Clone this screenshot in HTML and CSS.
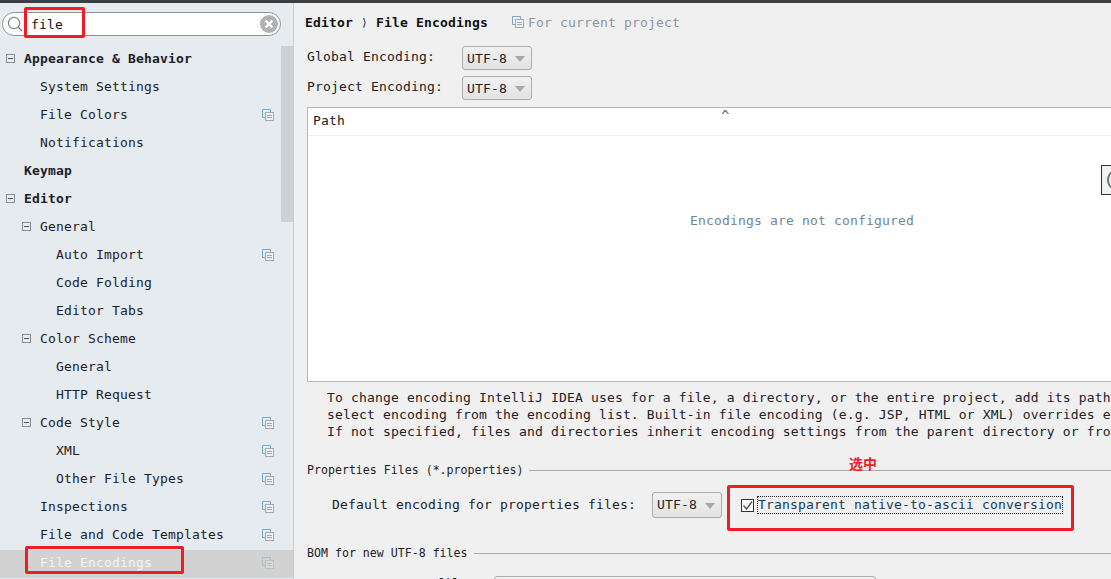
FILE: index.html
```html
<!DOCTYPE html>
<html lang="en">
<head>
    <meta charset="UTF-8">
    <meta name="viewport" content="width=device-width, initial-scale=1.0">
    <title>File Encodings</title>
    <link rel="stylesheet" href="styles.css">
</head>
<body>

    <svg class="defs" width="0" height="0">
        <symbol id="project-icon" viewBox="0 0 12 12">
            <path d="M0.5 8.5V0.5H8.5" fill="none" stroke="currentColor"/>
            <path d="M0.5 8.5H3M8.5 0.5V3" fill="none" stroke="currentColor"/>
            <rect x="3.5" y="3.5" width="8" height="8" fill="#f4f6f8" fill-opacity="0.5" stroke="#a4a9ad"/>
            <path d="M5 6.5H10M5 8.5H10" fill="none" stroke="#a4a9ad"/>
        </symbol>
    </svg>

    <div class="top-bar"></div>

    <div class="main">
        <aside class="sidebar">
            <div class="search">
                <svg class="search-icon" width="16" height="16" viewBox="0 0 17 17">
                    <circle cx="7.5" cy="7.5" r="6" fill="none" stroke="#7b8084" stroke-width="1.2"/>
                    <path d="M12 12L16 16" stroke="#7b8084" stroke-width="1.4"/>
                </svg>
                <span class="search-text">file</span>
                <svg class="search-clear" width="18" height="18" viewBox="0 0 18 18">
                    <circle cx="9" cy="9" r="9" fill="#b1b1b1"/>
                    <path d="M5.5 5.5L12.5 12.5M12.5 5.5L5.5 12.5" stroke="#fff" stroke-width="2.4"/>
                </svg>
            </div>

            <div class="tree">
                <div class="tree-row bold level-0"><i class="toggle"></i>Appearance &amp; Behavior</div>
                <div class="tree-row leaf-1">System Settings</div>
                <div class="tree-row leaf-1">File Colors<svg class="row-icon"><use href="#project-icon"/></svg></div>
                <div class="tree-row leaf-1">Notifications</div>
                <div class="tree-row bold leaf-0">Keymap</div>
                <div class="tree-row bold level-0"><i class="toggle"></i>Editor</div>
                <div class="tree-row level-1"><i class="toggle"></i>General</div>
                <div class="tree-row leaf-2">Auto Import<svg class="row-icon"><use href="#project-icon"/></svg></div>
                <div class="tree-row leaf-2">Code Folding</div>
                <div class="tree-row leaf-2">Editor Tabs</div>
                <div class="tree-row level-1"><i class="toggle"></i>Color Scheme</div>
                <div class="tree-row leaf-2">General</div>
                <div class="tree-row leaf-2">HTTP Request</div>
                <div class="tree-row level-1"><i class="toggle"></i>Code Style<svg class="row-icon"><use href="#project-icon"/></svg></div>
                <div class="tree-row leaf-2">XML<svg class="row-icon"><use href="#project-icon"/></svg></div>
                <div class="tree-row leaf-2">Other File Types<svg class="row-icon"><use href="#project-icon"/></svg></div>
                <div class="tree-row leaf-1">Inspections<svg class="row-icon"><use href="#project-icon"/></svg></div>
                <div class="tree-row leaf-1">File and Code Templates<svg class="row-icon"><use href="#project-icon"/></svg></div>
                <div class="tree-row leaf-1 selected">File Encodings<svg class="row-icon"><use href="#project-icon"/></svg></div>
            </div>

            <div class="tree-scroll"></div>
        </aside>

        <section class="content">
            <div class="crumbs">
                <b>Editor</b>
                <span class="crumb-sep">&#x27E9;</span>
                <b>File Encodings</b>
                <span class="crumb-note"><svg class="note-icon"><use href="#project-icon"/></svg>For current project</span>
            </div>

            <div class="form-row encoding-row">
                <label class="encoding-label">Global Encoding:</label>
                <div class="combo">UTF-8<i class="combo-arrow"></i></div>
            </div>
            <div class="form-row encoding-row">
                <label class="encoding-label">Project Encoding:</label>
                <div class="combo">UTF-8<i class="combo-arrow"></i></div>
            </div>

            <div class="path-table">
                <div class="table-head">Path<span class="sort-mark">^</span></div>
                <div class="table-empty">Encodings are not configured</div>
                <div class="table-tool"><i></i></div>
            </div>

            <div class="help-text">
                <div>To change encoding IntelliJ IDEA uses for a file, a directory, or the entire project, add its path</div>
                <div>select encoding from the encoding list. Built-in file encoding (e.g. JSP, HTML or XML) overrides encoding</div>
                <div>If not specified, files and directories inherit encoding settings from the parent directory or from</div>
            </div>

            <div class="section-title props-title">Properties Files (*.properties)<span class="section-line"></span></div>
            <div class="form-row props-row">
                <label>Default encoding for properties files:</label>
                <div class="combo combo-tall">UTF-8<i class="combo-arrow"></i></div>
                <div class="check">
                    <span class="check-box"><svg width="11" height="11" viewBox="0 0 11 11"><path d="M1.5 5.5L4.5 9L10 1.5" fill="none" stroke="#555" stroke-width="1.4"/></svg></span>
                    <span class="check-label">Transparent native-to-ascii conversion</span>
                </div>
            </div>

            <div class="section-title bom-title">BOM for new UTF-8 files<span class="section-line"></span></div>
            <div class="form-row bom-row">
                <label>Create UTF-8 files:</label>
                <div class="combo combo-wide">with NO BOM</div>
            </div>
        </section>
    </div>

    <!-- red marks drawn on the screenshot -->
    <div class="mark mark-search"></div>
    <div class="mark mark-item"></div>
    <div class="mark mark-check"></div>
    <div class="mark-note">选中</div>

</body>
</html>
```

FILE: styles.css
```css
* {
    box-sizing: border-box;
}
html, body {
    margin: 0;
    height: 579px;
    overflow: hidden;
}
body {
    font-family: 'DejaVu Sans Mono', 'Liberation Mono', monospace;
    font-size: 13px;
    letter-spacing: 0.17px;
    color: #1c2126;
    background-color: #f0f0f0;
    position: relative;
}
.defs {
    position: absolute;
}
.top-bar {
    height: 3px;
    background-color: #3c3f41;
}
.main {
    display: flex;
    height: 576px;
}

/* sidebar */
.sidebar {
    position: relative;
    flex: 0 0 294px;
    background-color: #e6ebf0;
    border-right: 1px solid #c9cdd0;
    overflow: hidden;
}
.search {
    display: flex;
    align-items: center;
    height: 24px;
    width: 279px;
    margin: 9px 0 10px 2px;
    padding: 0 2px 0 4px;
    background-color: #fff;
    border: 1px solid #8f9498;
    border-radius: 12px;
}
.search-icon {
    flex: none;
    margin-right: 8px;
}
.search-text {
    color: #111;
}
.search-clear {
    margin-left: auto;
}
.tree-row {
    display: flex;
    align-items: center;
    height: 28px;
    padding-bottom: 4px;
    white-space: pre;
}
.bold {
    font-weight: bold;
}
.level-0 {
    padding-left: 6px;
}
.level-1 {
    padding-left: 22px;
}
.leaf-0 {
    padding-left: 24px;
}
.leaf-1 {
    padding-left: 40px;
}
.leaf-2 {
    padding-left: 56px;
}
.toggle {
    position: relative;
    flex: none;
    width: 9px;
    height: 9px;
    margin-right: 9px;
    border: 1px solid #8a8f93;
}
.toggle::after {
    content: "";
    position: absolute;
    left: 1px;
    right: 1px;
    top: 3px;
    height: 1px;
    background-color: #555;
}
.row-icon {
    flex: none;
    width: 12px;
    height: 12px;
    margin-left: auto;
    margin-right: 19px;
    margin-top: 2px;
    color: #7ea6c8;
}
.selected {
    background-color: #d2d2d2;
    color: #f4f4f4;
}
.selected .row-icon {
    opacity: 0.45;
}
.tree-scroll {
    position: absolute;
    right: 0;
    top: 43px;
    width: 12px;
    height: 176px;
    background-color: #ccd1d4;
}

/* right panel */
.content {
    flex: 1;
    min-width: 0;
    overflow: hidden;
    white-space: nowrap;
    padding-left: 11px;
    background-color: #f0f0f0;
}
.crumbs {
    display: flex;
    align-items: center;
    height: 20px;
    margin-top: 9px;
    color: #111;
}
.crumb-sep {
    width: 23px;
    text-align: center;
    font-size: 11px;
}
.crumb-note {
    display: flex;
    align-items: center;
    margin-left: 24px;
    color: #8b959c;
}
.note-icon {
    width: 12px;
    height: 12px;
    margin-right: 4px;
    color: #7ea6c8;
}
.form-row {
    display: flex;
    align-items: center;
}
.encoding-row {
    height: 30px;
    padding-left: 2px;
}
.crumbs + .encoding-row {
    margin-top: 11px;
}
.encoding-label {
    width: 155px;
    margin-bottom: 4px;
}
.combo {
    display: flex;
    align-items: center;
    flex: none;
    width: 70px;
    height: 24px;
    padding-left: 4px;
    border: 1px solid #adadad;
    border-radius: 3px;
    background: linear-gradient(#f0f0f0, #e3e3e3);
    color: #222;
}
.combo-tall {
    height: 26px;
    margin-top: 1px;
}
.combo-arrow {
    margin-left: 8px;
    margin-top: 2px;
    border-left: 5px solid transparent;
    border-right: 5px solid transparent;
    border-top: 6px solid #a8a8a8;
}
.path-table {
    position: relative;
    width: 990px;
    height: 275px;
    margin: 4px 0 0 2px;
    background-color: #fff;
    border: 1px solid #b8b8b8;
}
.table-head {
    position: relative;
    height: 28px;
    padding: 5px 0 0 5px;
    line-height: 16px;
    border-bottom: 1px solid #f0f0f0;
}
.sort-mark {
    position: absolute;
    left: 413px;
    top: 0;
    color: #666;
    font-size: 14px;
}
.table-empty {
    margin-top: 77px;
    text-align: center;
    color: #6e8796;
}
.table-tool {
    position: absolute;
    left: 793px;
    top: 57px;
    width: 30px;
    height: 30px;
    background-color: #f2f2f2;
    border: 1px solid #333;
}
.table-tool i {
    display: block;
    width: 14px;
    height: 18px;
    margin: 5px 0 0 5px;
    border: 2px solid #6d7a76;
    border-radius: 50%;
}
.help-text {
    margin: 7px 0 0 22px;
    line-height: 17px;
}
.section-title {
    display: flex;
    align-items: center;
    padding-left: 2px;
    font-size: 11.6px;
    letter-spacing: 0;
    color: #222;
    height: 16px;
}
.section-line {
    flex: 1;
    height: 1px;
    margin-left: 6px;
    background-color: #aaa;
}
.props-title {
    margin-top: 22px;
}
.props-row {
    height: 26px;
    margin-top: 13px;
    padding-left: 27px;
}
.props-row label {
    width: 320px;
}
.check {
    display: flex;
    align-items: center;
    margin-left: 19px;
}
.check-box {
    display: flex;
    align-items: center;
    justify-content: center;
    width: 13px;
    height: 13px;
    margin-top: 3px;
    background-color: #fff;
    border: 1px solid #333;
}
.check-label {
    margin-left: 4px;
    margin-top: 1px;
    line-height: 16px;
    outline: 1px dotted #222;
    color: #123a5c;
}
.bom-title {
    margin-top: 28px;
}
.bom-row {
    align-items: flex-start;
    height: 24px;
    margin-top: 15px;
    padding-left: 27px;
}
.bom-row label {
    width: 162px;
}
.combo-wide {
    width: 382px;
    height: 24px;
    align-items: flex-start;
    padding: 1px 0 0 4px;
}

/* annotations */
.mark {
    position: absolute;
    border: 3px solid #ee1c25;
    border-radius: 2px;
}
.mark-search {
    left: 24px;
    top: 7px;
    width: 61px;
    height: 31px;
}
.mark-item {
    left: 25px;
    top: 546px;
    width: 159px;
    height: 28px;
}
.mark-check {
    left: 727px;
    top: 485px;
    width: 347px;
    height: 46px;
}
.mark-note {
    position: absolute;
    left: 849px;
    top: 455px;
    font-family: 'Noto Sans CJK SC', sans-serif;
    font-size: 14px;
    font-weight: bold;
    line-height: 16px;
    letter-spacing: 0;
    color: #ee1c25;
}
```
